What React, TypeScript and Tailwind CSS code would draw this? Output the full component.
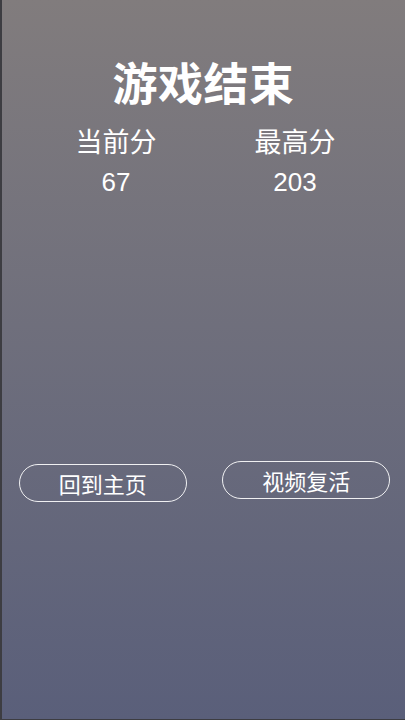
import React from 'react';

const font = { fontFamily: '"Noto Sans CJK SC", "Noto Sans", sans-serif' };

export default function App() {
  return (
    <div
      style={font}
      className="w-[405px] h-[720px] flex flex-col bg-gradient-to-b from-[#817c7d] to-[#5a5f7a] border-l-2 border-b border-[#3d3d42] text-white"
    >
      {/* Title */}
      <h1 className="mt-[55px] text-center text-[45px] font-bold leading-[54px] tracking-[0.5px]">
        游戏结束
      </h1>

      {/* Scores */}
      <div className="mt-[14px] pl-[4px] flex justify-center gap-[79px]">
        <ScoreBox label="当前分" value={67} />
        <ScoreBox label="最高分" value={203} />
      </div>

      {/* Actions */}
      <div className="mt-[261px] grid grid-cols-2">
        <div className="flex justify-center pt-[3px]">
          <OutlineButton label="回到主页" />
        </div>
        <div className="flex justify-center pl-[4px]">
          <OutlineButton label="视频复活" />
        </div>
      </div>
    </div>
  );
}

const ScoreBox: React.FC<{ label: string; value: number }> = ({ label, value }) => (
  <div className="w-[100px] flex flex-col items-center">
    <span className="text-[27px] leading-[36px]">{label}</span>
    <span
      className="mt-[5px] text-[26px] leading-[36px]"
      style={{ fontFamily: '"Liberation Sans", Arial, sans-serif' }}
    >
      {value}
    </span>
  </div>
);

const OutlineButton: React.FC<{ label: string }> = ({ label }) => (
  <button className="w-[168px] h-[38px] rounded-full border border-white/90 text-[22px] leading-none text-white flex items-center justify-center">
    {label}
  </button>
);
